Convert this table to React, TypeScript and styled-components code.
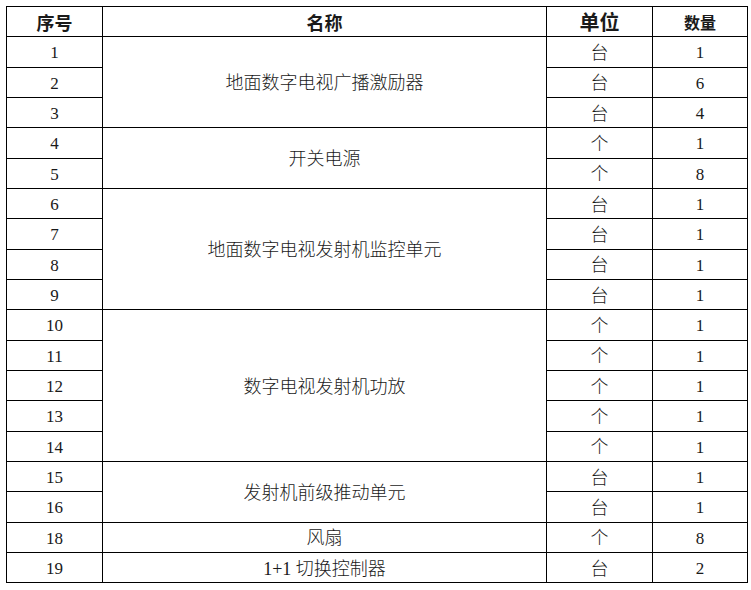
import React from "react";
import styled, { createGlobalStyle } from "styled-components";

const GlobalStyle = createGlobalStyle`
  html, body {
    margin: 0;
    padding: 0;
    background: #ffffff;
  }
`;

const Page = styled.div`
  padding: 6px 0 0 6px;
  font-family: "Liberation Serif", "Noto Sans CJK SC", serif;
  color: #1a1a1a;
`;

const Table = styled.table`
  border-collapse: collapse;
  table-layout: fixed;
  width: 741px;
`;

const Col = styled.col<{ $w: number }>`
  width: ${(p) => p.$w}px;
`;

const Row = styled.tr`
  height: 30.33px;
`;

const HeadCell = styled.th<{ $size: number }>`
  border: 1px solid #000;
  padding: 0;
  text-align: center;
  vertical-align: middle;
  font-family: "Noto Sans CJK SC", sans-serif;
  font-weight: 700;
  font-size: ${(p) => p.$size}px;
  line-height: 1;
`;

const Cell = styled.td<{ $cjk?: boolean }>`
  border: 1px solid #000;
  padding: 2px 0 0;
  text-align: center;
  vertical-align: middle;
  font-size: ${(p) => (p.$cjk ? 18 : 17)}px;
  font-weight: ${(p) => (p.$cjk ? 300 : 400)};
  line-height: 1;
`;

const NameCell = styled(Cell)`
  font-size: 18px;
  font-weight: 300;
`;

type Item = { no: number; unit: string; qty: number };
type Group = { name: string; items: Item[] };

const groups: Group[] = [
  {
    name: "地面数字电视广播激励器",
    items: [
      { no: 1, unit: "台", qty: 1 },
      { no: 2, unit: "台", qty: 6 },
      { no: 3, unit: "台", qty: 4 },
    ],
  },
  {
    name: "开关电源",
    items: [
      { no: 4, unit: "个", qty: 1 },
      { no: 5, unit: "个", qty: 8 },
    ],
  },
  {
    name: "地面数字电视发射机监控单元",
    items: [
      { no: 6, unit: "台", qty: 1 },
      { no: 7, unit: "台", qty: 1 },
      { no: 8, unit: "台", qty: 1 },
      { no: 9, unit: "台", qty: 1 },
    ],
  },
  {
    name: "数字电视发射机功放",
    items: [
      { no: 10, unit: "个", qty: 1 },
      { no: 11, unit: "个", qty: 1 },
      { no: 12, unit: "个", qty: 1 },
      { no: 13, unit: "个", qty: 1 },
      { no: 14, unit: "个", qty: 1 },
    ],
  },
  {
    name: "发射机前级推动单元",
    items: [
      { no: 15, unit: "台", qty: 1 },
      { no: 16, unit: "台", qty: 1 },
    ],
  },
  { name: "风扇", items: [{ no: 18, unit: "个", qty: 8 }] },
  { name: "1+1 切换控制器", items: [{ no: 19, unit: "台", qty: 2 }] },
];

export default function App() {
  return (
    <>
      <GlobalStyle />
      <Page>
        <Table>
          <colgroup>
            <Col $w={96} />
            <Col $w={444} />
            <Col $w={106} />
            <Col $w={95} />
          </colgroup>
          <tbody>
            <Row>
              <HeadCell $size={18}>序号</HeadCell>
              <HeadCell $size={18}>名称</HeadCell>
              <HeadCell $size={20}>单位</HeadCell>
              <HeadCell $size={16}>数量</HeadCell>
            </Row>
            {groups.map((g) =>
              g.items.map((it, i) => (
                <Row key={it.no}>
                  <Cell>{it.no}</Cell>
                  {i === 0 && (
                    <NameCell rowSpan={g.items.length}>{g.name}</NameCell>
                  )}
                  <Cell $cjk>{it.unit}</Cell>
                  <Cell>{it.qty}</Cell>
                </Row>
              ))
            )}
          </tbody>
        </Table>
      </Page>
    </>
  );
}
